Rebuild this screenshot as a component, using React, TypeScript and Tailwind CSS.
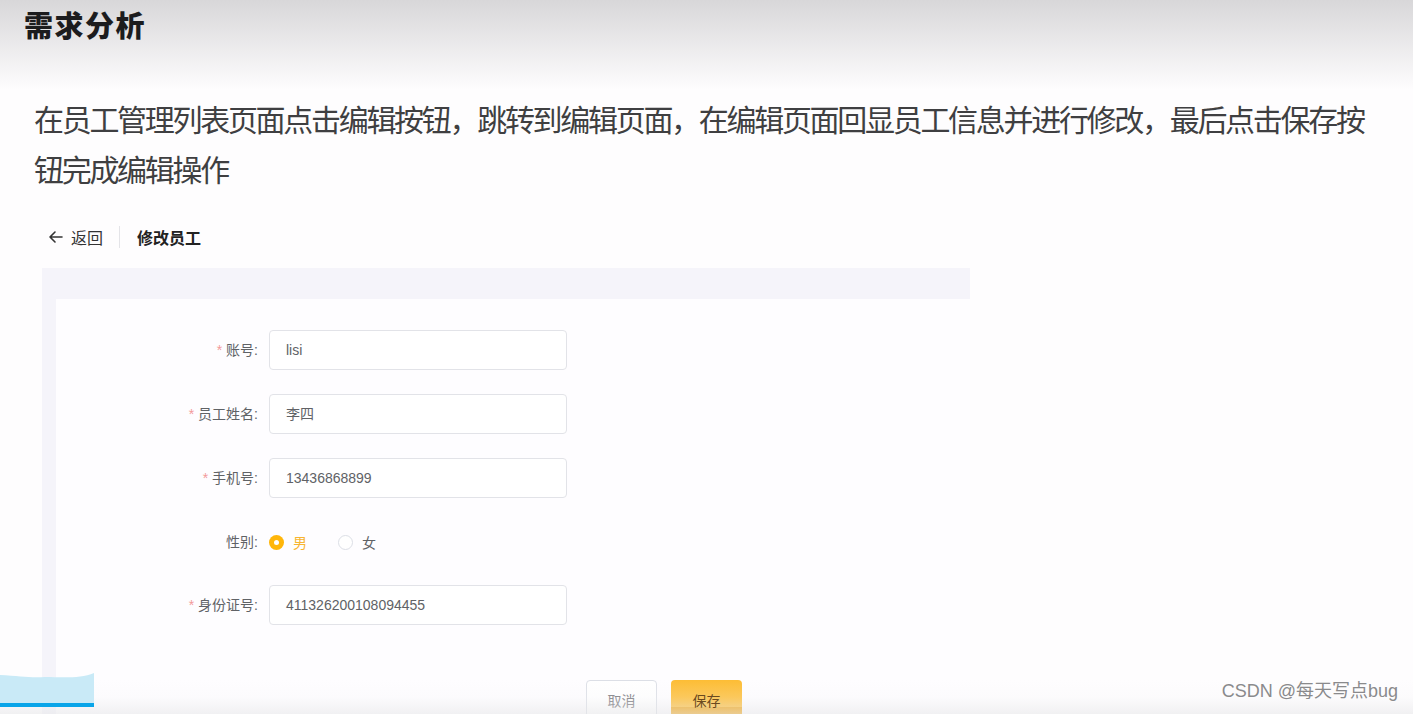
import React from "react";

const cjk = "font-['Noto_Sans_CJK_SC','Noto_Sans',sans-serif]";
const latin = "font-['Liberation_Sans','Noto_Sans_CJK_SC',sans-serif]";

function Field({ label, value, required = true }: { label: string; value: string; required?: boolean }) {
  return (
    <div className="flex items-center h-[40px] mb-[24px]">
      <div className={`w-[213px] pr-[11px] text-right text-[14px] text-[#606266] ${latin}`}>
        {required && <span className="text-[#f39a9a] mr-[4px]">*</span>}
        {label}:
      </div>
      <div className={`w-[298px] h-[40px] border border-[#e2e3e8] rounded-[4px] bg-white flex items-center pl-[16px] text-[14px] text-[#606266] ${latin}`}>
        {value}
      </div>
    </div>
  );
}

export default function App() {
  return (
    <div className={`relative w-[1413px] h-[714px] overflow-hidden bg-[#fefdfe] ${cjk}`}>
      <div className="h-[90px] bg-gradient-to-b from-[#d8d7d9] to-[#fefdfe] pl-[24px] pt-[5px]">
        <div className="text-[29px] leading-[38px] font-black text-[#1c1c1e] tracking-[1.5px]">需求分析</div>
      </div>
      <div className="pl-[34px] pt-[3px] w-[1413px] whitespace-nowrap text-[30px] leading-[50px] text-[#3f3f41] tracking-[-2.3px]">
        在员工管理列表页面点击编辑按钮，跳转到编辑页面，在编辑页面回显员工信息并进行修改，最后点击保存按
        <br />
        钮完成编辑操作
      </div>
      <div className="mt-[32px] h-[24px] flex items-center pl-[48px]">
        <svg width="15" height="14" viewBox="0 0 15 14" fill="none" stroke="#333" strokeWidth="1.6" strokeLinecap="round" strokeLinejoin="round">
          <path d="M14 7H2M7 2L2 7l5 5" />
        </svg>
        <span className="ml-[8px] text-[16px] text-[#333]">返回</span>
        <div className="ml-[16px] w-px h-[22px] bg-[#e4e4e8]" />
        <span className="ml-[17px] text-[16px] font-bold text-[#222]">修改员工</span>
      </div>
      <div className="mt-[19px] ml-[42px] w-[928px] h-[500px] bg-[#f5f4fa] pt-[31px] pl-[14px]">
        <div className="bg-[#fefdff] h-full pt-[31px]">
          <Field label="账号" value="lisi" />
          <Field label="员工姓名" value="李四" />
          <Field label="手机号" value="13436868899" />
          <div className="flex items-center h-[40px] mb-[23px]">
            <div className={`w-[213px] pr-[11px] text-right text-[14px] text-[#606266] ${latin}`}>性别:</div>
            <div className="flex items-center">
              <span className="w-[15px] h-[15px] rounded-full bg-[#ffb60a] flex items-center justify-center">
                <span className="w-[5px] h-[5px] rounded-full bg-white" />
              </span>
              <span className="ml-[9px] text-[14px] text-[#f7b532]">男</span>
              <span className="ml-[31px] w-[15px] h-[15px] rounded-full border border-[#dcdfe6] bg-white" />
              <span className="ml-[9px] text-[14px] text-[#606266]">女</span>
            </div>
          </div>
          <Field label="身份证号" value="411326200108094455" />
          <div className="mt-[55px] flex pl-[530px]">
            <div className="w-[71px] h-[40px] border border-[#dcdfe6] rounded-[4px] bg-white flex items-center justify-center text-[14px] text-[#77777c]">取消</div>
            <div className="ml-[14px] w-[71px] h-[40px] rounded-[4px] bg-[#fdbd35] flex items-center justify-center text-[14px] text-[#6b4a1f] relative overflow-hidden">
              <span className="relative z-10">保存</span>
              <span className="absolute left-0 right-0 top-[27px] bottom-0 bg-[#f0a20a]" />
            </div>
          </div>
        </div>
      </div>
      <div className="absolute left-0 right-0 bottom-0 h-[34px] bg-gradient-to-b from-[rgba(250,250,252,0)] via-[rgba(244,244,246,0.2)] to-[rgba(232,232,234,0.6)] pointer-events-none" />
      <svg className="absolute left-0 bottom-[7px]" width="94" height="36" viewBox="0 0 94 36">
        <path d="M0 4 C20 5 30 7 45 6 C60 6 80 8 94 2 L94 36 L0 36 Z" fill="#c9eaf7" />
      </svg>
      <div className="absolute left-0 bottom-[7px] w-[94px] h-[4px] bg-[#09a5e9]" />
      <div className={`absolute right-[15px] bottom-[9px] text-[18px] text-[#8a8a8c] ${latin} [text-shadow:0_0_2px_#fff,0_0_2px_#fff]`}>
        CSDN @每天写点bug
      </div>
    </div>
  );
}
